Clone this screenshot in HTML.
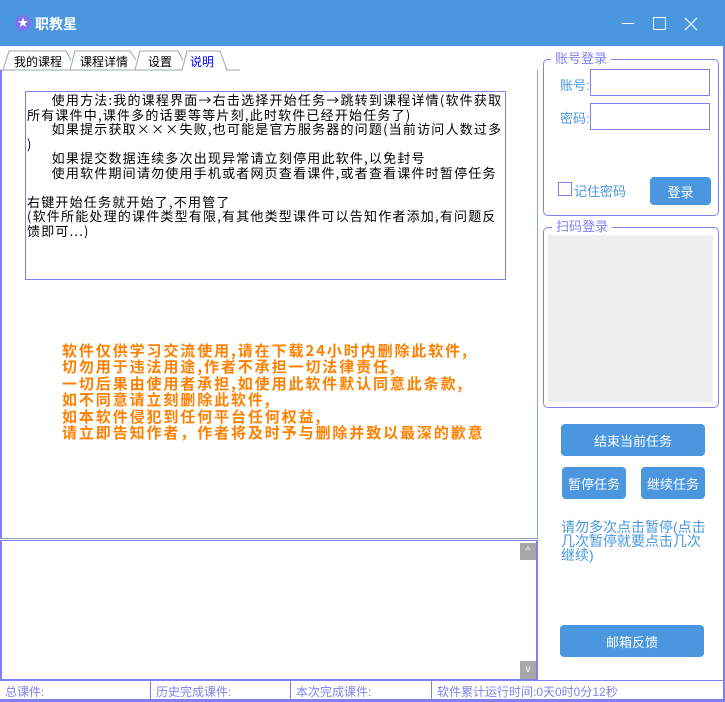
<!DOCTYPE html>
<html><head><meta charset="utf-8"><style>
*{margin:0;padding:0;box-sizing:border-box}
body{width:725px;height:702px;position:relative;background:#fff;font-family:"Liberation Sans","Noto Sans CJK SC","WenQuanYi Zen Hei",sans-serif;overflow:hidden}
.a{position:absolute}
.cjk{font-family:"WenQuanYi Zen Hei","Noto Sans CJK SC",sans-serif}
.btn{position:absolute;background:#4a97e0;color:#fff;border-radius:4px;font-size:13px;display:flex;align-items:center;justify-content:center}
.grp{position:absolute;border:1px solid #8080f0;border-radius:5px}
.lg{position:absolute;background:#fff;color:#8080f0;font-size:13px;padding:0 4px;line-height:14px}
.inp{position:absolute;border:1px solid #8080f0;background:#fff}
.lbl{position:absolute;color:#4a97e0;font-size:13px}
.st{position:absolute;top:683px;font-size:12px;color:#8080f0}
</style></head><body>
<div class="a" style="left:0;top:0;width:725px;height:46px;background:#4a97e0"></div>
<div class="a" style="left:15px;top:15px;width:16px;height:16px;border-radius:50%;background:#7b72f0;color:#fff;font-size:11px;text-align:center;line-height:16px">★</div>
<div class="a" style="left:35px;top:14px;color:#fff;font-size:14px;font-weight:bold">职教星</div>
<div class="a" style="left:622px;top:23px;width:12px;height:1px;background:#fff"></div>
<div class="a" style="left:653px;top:17px;width:13px;height:13px;border:1px solid #fff"></div>
<svg class="a" style="left:684px;top:17px" width="14" height="14"><path d="M1 1L13 13M13 1L1 13" stroke="#fff" stroke-width="1.2"/></svg>
<div class="a" style="left:723px;top:46px;width:2px;height:656px;background:#8080f0"></div>
<!-- tabs -->
<svg class="a" style="left:0;top:48px" width="240" height="24">
<path d="M3 22L9 3H66L71 12" fill="none" stroke="#9aa" />
<path d="M70 22L75 3H130L136 12" fill="none" stroke="#9aa"/>
<path d="M135 22L140 3H178L183 12" fill="none" stroke="#9aa"/>
<path d="M182 22L187 3H220L227 22" fill="none" stroke="#9aa"/>
<path d="M0 22H183M226 22H537" stroke="#9aa"/>
</svg>
<div class="a" style="left:14px;top:53px;font-size:12px">我的课程</div>
<div class="a" style="left:80px;top:53px;font-size:12px">课程详情</div>
<div class="a" style="left:148px;top:53px;font-size:12px">设置</div>
<div class="a" style="left:190px;top:53px;font-size:12px;color:#00f">说明</div>
<div class="a" style="left:0;top:70px;width:538px;height:469px;border:1px solid #8aa;border-top:none;border-left:2px solid #8080f0"></div>
<div class="a" style="left:25px;top:91px;width:481px;height:189px;border:1px solid #8080f0"></div>
<div class="a cjk" style="left:27px;top:93px;font-size:13px;line-height:14.5px;white-space:pre;color:#000;letter-spacing:1.2px">      使用方法:我的课程界面→右击选择开始任务→跳转到课程详情(软件获取
所有课件中,课件多的话要等等片刻,此时软件已经开始任务了)
      如果提示获取×××失败,也可能是官方服务器的问题(当前访问人数过多
)
      如果提交数据连续多次出现异常请立刻停用此软件,以免封号
      使用软件期间请勿使用手机或者网页查看课件,或者查看课件时暂停任务

右键开始任务就开始了,不用管了
(软件所能处理的课件类型有限,有其他类型课件可以告知作者添加,有问题反
馈即可...)</div>
<div class="a cjk" style="left:62px;top:343px;font-size:15px;line-height:16.4px;color:#ff8000;font-weight:bold;white-space:pre;letter-spacing:1.9px">软件仅供学习交流使用,请在下载24小时内删除此软件,
切勿用于违法用途,作者不承担一切法律责任,
一切后果由使用者承担,如使用此软件默认同意此条款,
如不同意请立刻删除此软件,
如本软件侵犯到任何平台任何权益,
请立即告知作者，作者将及时予与删除并致以最深的歉意</div>
<!-- log -->
<div class="a" style="left:0;top:540px;width:538px;height:141px;border:2px solid #8080f0;border-top:1px solid #8080f0"></div>
<div class="a" style="left:520px;top:543px;width:16px;height:17px;background:#a8a8a8;color:#fff;font-size:10px;text-align:center;line-height:17px">^</div>
<div class="a" style="left:520px;top:661px;width:16px;height:18px;background:#a8a8a8;color:#fff;font-size:10px;text-align:center;line-height:18px">v</div>
<!-- status -->
<div class="a" style="left:0;top:680px;width:725px;height:1px;background:#8080f0"></div>
<div class="a" style="left:0;top:699px;width:725px;height:3px;background:#8080f0"></div>
<div class="a" style="left:150px;top:681px;width:1px;height:18px;background:#8080f0"></div>
<div class="a" style="left:290px;top:681px;width:1px;height:18px;background:#8080f0"></div>
<div class="a" style="left:431px;top:681px;width:1px;height:18px;background:#8080f0"></div>
<div class="st" style="left:5px">总课件:</div>
<div class="st" style="left:156px">历史完成课件:</div>
<div class="st" style="left:296px">本次完成课件:</div>
<div class="st" style="left:437px">软件累计运行时间:0天0时0分12秒</div>
<!-- right -->
<div class="grp" style="left:543px;top:59px;width:176px;height:157px"></div>
<div class="lg" style="left:551px;top:52px">账号登录</div>
<div class="lbl" style="left:560px;top:75px">账号:</div>
<div class="inp" style="left:590px;top:69px;width:120px;height:27px"></div>
<div class="lbl" style="left:560px;top:108px">密码:</div>
<div class="inp" style="left:590px;top:103px;width:120px;height:27px"></div>
<div class="a" style="left:558px;top:182px;width:14px;height:14px;border:1px solid #8080f0"></div>
<div class="lbl" style="left:574px;top:181px">记住密码</div>
<div class="btn" style="left:650px;top:177px;width:61px;height:28px">登录</div>
<div class="grp" style="left:543px;top:227px;width:176px;height:181px"></div>
<div class="lg" style="left:552px;top:220px">扫码登录</div>
<div class="a" style="left:548px;top:235px;width:165px;height:167px;background:#efefef"></div>
<div class="btn" style="left:561px;top:424px;width:144px;height:32px">结束当前任务</div>
<div class="btn" style="left:562px;top:467px;width:64px;height:32px">暂停任务</div>
<div class="btn" style="left:641px;top:467px;width:64px;height:32px">继续任务</div>
<div class="a" style="left:561px;top:520px;width:150px;font-size:14px;line-height:14px;color:#4a97e0">请勿多次点击暂停(点击几次暂停就要点击几次继续)</div>
<div class="btn" style="left:560px;top:625px;width:144px;height:32px">邮箱反馈</div>
</body></html>
